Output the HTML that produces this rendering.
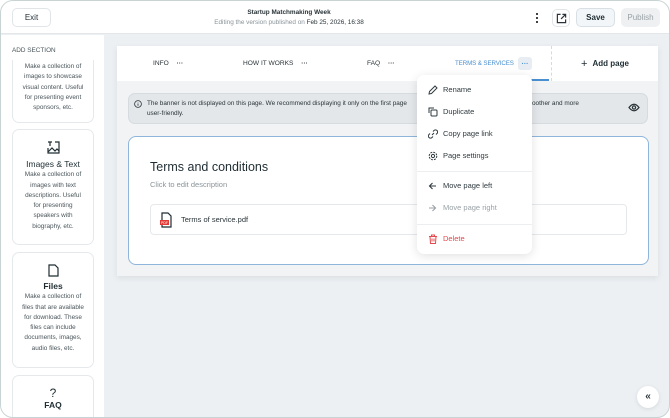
<!DOCTYPE html>
<html><head><meta charset="utf-8"><style>
*{box-sizing:border-box;margin:0;padding:0}
body{width:670px;height:418px;background:#fff;font-family:"Liberation Sans",sans-serif;color:#1f2d33;overflow:hidden;position:relative}
.frame{position:absolute;left:0;top:0;width:670px;height:418px;border:1px solid #c8d3d3;border-radius:13px;overflow:hidden;background:#ecf0f3}
.hdr{position:absolute;left:0;top:0;width:670px;height:33px;background:#fff;border-bottom:1px solid #e3e7ea}
.btn{position:absolute;border:1px solid #e1e5e8;border-radius:5px;font-size:8px;display:flex;align-items:center;justify-content:center}
.side{position:absolute;left:0;top:34px;width:103px;height:384px;background:#fff}
.card{position:absolute;left:11px;width:82px;border:1px solid #e6e9ec;border-radius:7px;text-align:center;font-size:6.4px;line-height:10.3px;color:#4a555a;background:#fff}
.card b{display:block;font-size:8.5px;color:#1f2d33;font-weight:normal;line-height:11px}
.abs{position:absolute}
.tab{position:absolute;top:59px;font-size:6.6px;color:#2a3438}
.mi{position:absolute;left:442px;font-size:7.5px;color:#2f3a3f}
.ic{position:absolute;left:427px}
</style></head><body><div class="frame">
<div class="hdr">
 <div class="btn" style="left:11px;top:7px;width:39px;height:19px;color:#1f2d33">Exit</div>
 <div class="abs" style="left:0;width:576px;top:8px;text-align:center;font-size:6.4px;font-weight:bold;color:#2a3438">Startup Matchmaking Week</div>
 <div class="abs" style="left:0;width:576px;top:18px;text-align:center;font-size:6.4px;color:#8a9499">Editing the version published on <span style="color:#2a3438">Feb 25, 2026, 16:38</span></div>
 <div class="abs" style="left:535px;top:11px;width:2px;height:11px;background:radial-gradient(circle,#333 1px,transparent 1.2px) 0 0/2px 4px"></div>
 <div class="btn" style="left:551px;top:8px;width:18px;height:18px"><svg width="11" height="11" viewBox="0 0 12 12" fill="none" stroke="#2a3438" stroke-width="1.3"><path d="M5 1.5H1.5v9h9V7M7 1.5h3.5V5M10.5 1.5 5.5 6.5"/></svg></div>
 <div class="btn" style="left:575px;top:7px;width:39px;height:19px;background:#f3f6f8;border-color:#d8e0e6;font-weight:bold">Save</div>
 <div class="btn" style="left:620px;top:7px;width:39px;height:19px;background:#eef0f2;border-color:#eef0f2;color:#9aa2a6">Publish</div>
</div>
<div class="side">
 <div class="abs" style="left:11px;top:12px;font-size:6.4px;color:#4a555a">ADD SECTION</div>
 <div class="card" style="top:25px;height:63px;border-top:none;border-radius:0 0 7px 7px;padding-top:2px">Make a collection of<br>images to showcase<br>visual content. Useful<br>for presenting event<br>sponsors, etc.</div>
 <div class="card" style="top:94px;height:116px;padding-top:11px"><svg width="13" height="13" viewBox="0 0 13 13" fill="none" stroke="#1f2d33" stroke-width="1.2"><path d="M1 1h4M3 1v4M8 1h4v11H1V7M1 11l4-4 3 3 2-2 2 2"/></svg><b style="margin-top:1px">Images &amp; Text</b>Make a collection of<br>images with text<br>descriptions. Useful<br>for presenting<br>speakers with<br>biography, etc.</div>
 <div class="card" style="top:217px;height:116px;padding-top:11px"><svg width="11" height="13" viewBox="0 0 11 13" fill="none" stroke="#1f2d33" stroke-width="1.2"><path d="M1 1h6l3 3v8H1z"/></svg><b style="font-weight:bold">Files</b>Make a collection of<br>files that are available<br>for download. These<br>files can include<br>documents, images,<br>audio files, etc.</div>
 <div class="card" style="top:340px;height:60px;padding-top:10px"><b style="font-size:12px;line-height:14px">?</b><b style="font-weight:bold">FAQ</b></div>
</div>
<div class="abs" style="left:116px;top:45px;width:541px;height:230px;background:#f1f3f5;box-shadow:0 2px 6px rgba(0,0,0,.08)"></div>
<div class="abs" style="left:116px;top:45px;width:434px;height:35px;background:#fff"></div>
<div class="abs" style="left:550px;top:45px;width:107px;height:35px;background:#fff;border-left:1px dashed #d5dadd;font-size:8px;font-weight:bold;display:flex;align-items:center;justify-content:center"><span style="font-size:11px;font-weight:normal;margin-right:5px">+</span>Add page</div>
<div class="tab" style="left:152px">INFO <span style="margin-left:6px;font-weight:bold">···</span></div>
<div class="tab" style="left:242px">HOW IT WORKS <span style="margin-left:6px;font-weight:bold">···</span></div>
<div class="tab" style="left:366px">FAQ <span style="margin-left:6px;font-weight:bold">···</span></div>
<div class="tab" style="left:454px;color:#4a8fd0;font-size:6.2px;letter-spacing:-.1px">TERMS &amp; SERVICES</div>
<div class="abs" style="left:517px;top:56px;width:14px;height:13px;background:#e7edf3;border-radius:3px;color:#4a8fd0;font-size:7px;font-weight:bold;text-align:center;line-height:15px">···</div>
<div class="abs" style="left:430px;top:78px;width:118px;height:2px;background:#4a8fd0"></div>
<div class="abs" style="left:127px;top:92px;width:520px;height:31px;background:#e3e7ea;border:1px solid #d6dbdf;border-radius:7px;font-size:6.4px;color:#2a3438;line-height:10px;padding:5px 0 0 18px">The banner is not displayed on this page. We recommend displaying it only on the first page<span style="position:absolute;left:403px;top:5px">oother and more</span><br>user-friendly.
 <svg class="abs" style="left:5px;top:6px" width="8" height="8" viewBox="0 0 8 8" fill="none" stroke="#2a3438" stroke-width=".8"><circle cx="4" cy="4" r="3.4"/><path d="M4 3.5v2.3M4 2.2v.4"/></svg>
 <svg class="abs" style="left:499px;top:9px" width="12" height="9" viewBox="0 0 12 9" fill="none" stroke="#2a3438" stroke-width="1.2"><path d="M1 4.5Q6-2 11 4.5Q6 11 1 4.5z"/><circle cx="6" cy="4.5" r="1.6"/></svg>
</div>
<div class="abs" style="left:127px;top:135px;width:521px;height:129px;background:#fff;border:1px solid #8fb5da;border-radius:8px">
 <div class="abs" style="left:21px;top:23px;font-size:12.5px;color:#1f2d33">Terms and conditions</div>
 <div class="abs" style="left:21px;top:43px;font-size:7.5px;color:#8a9499">Click to edit description</div>
 <div class="abs" style="left:21px;top:67px;width:477px;height:31px;border:1px solid #e6e9ec;border-radius:4px">
  <svg class="abs" style="left:8px;top:7px" width="14" height="16" viewBox="0 0 14 16"><path d="M3 1h6l3 3v11H3z" fill="#fff" stroke="#1f2d33" stroke-width="1.2"/><rect x="1" y="8" width="9" height="5" fill="#e53935"/><text x="2" y="12" font-size="3.5" fill="#fff" font-family="Liberation Sans">PDF</text></svg>
  <div class="abs" style="left:30px;top:10px;font-size:7.5px;color:#2a3438">Terms of service.pdf</div>
 </div>
</div>
<div class="abs" style="left:416px;top:74px;width:115px;height:179px;background:#fff;border-radius:7px;box-shadow:0 2px 10px rgba(0,0,0,.12)">
 <div class="abs" style="left:0;top:96px;width:115px;height:1px;background:#eceef0"></div>
 <div class="abs" style="left:0;top:149px;width:115px;height:1px;background:#eceef0"></div>
</div>
<svg class="ic" style="top:84px" width="10" height="10" viewBox="0 0 10 10" fill="none" stroke="#2f3a3f" stroke-width="1"><path d="M1 9l.5-2.5L7 1l2 2-5.5 5.5z"/></svg>
<div class="mi" style="top:84px">Rename</div>
<svg class="ic" style="top:106px" width="10" height="10" viewBox="0 0 10 10" fill="none" stroke="#2f3a3f" stroke-width="1"><path d="M1 6V1h5"/><rect x="3" y="3" width="6" height="6" rx="1"/></svg>
<div class="mi" style="top:106px">Duplicate</div>
<svg class="ic" style="top:128px" width="10" height="10" viewBox="0 0 10 10" fill="none" stroke="#2f3a3f" stroke-width="1"><path d="M4 6l2-2M5 2.5l1-1a2 2 0 013 3l-1 1M5 7.5l-1 1a2 2 0 01-3-3l1-1"/></svg>
<div class="mi" style="top:128px">Copy page link</div>
<svg class="ic" style="top:150px" width="10" height="10" viewBox="0 0 10 10" fill="none" stroke="#2f3a3f" stroke-width="1"><circle cx="5" cy="5" r="1.6"/><circle cx="5" cy="5" r="3.8" stroke-dasharray="2 1"/></svg>
<div class="mi" style="top:150px">Page settings</div>
<svg class="ic" style="top:181px" width="9" height="8" viewBox="0 0 9 8" fill="none" stroke="#2f3a3f" stroke-width="1.1"><path d="M8 4H1.5M4.5 1L1.5 4l3 3"/></svg>
<div class="mi" style="top:180px">Move page left</div>
<svg class="ic" style="top:203px" width="9" height="8" viewBox="0 0 9 8" fill="none" stroke="#9aa2a6" stroke-width="1.1"><path d="M1 4h6.5M4.5 1l3 3-3 3"/></svg>
<div class="mi" style="top:202px;color:#9aa2a6">Move page right</div>
<svg class="ic" style="top:233px" width="10" height="10" viewBox="0 0 10 10" fill="none" stroke="#e5484d" stroke-width="1"><path d="M1 2.5h8M3.5 2.5V1h3v1.5M2 2.5l.5 7h5l.5-7M4 4.5v3M6 4.5v3"/></svg>
<div class="mi" style="top:233px;color:#e5484d">Delete</div>
<div class="abs" style="left:636px;top:385px;width:22px;height:22px;border-radius:50%;background:#fff;box-shadow:0 1px 4px rgba(0,0,0,.1);font-size:10px;font-weight:bold;color:#2a3438;text-align:center;line-height:21px">«</div>
</div></body></html>
